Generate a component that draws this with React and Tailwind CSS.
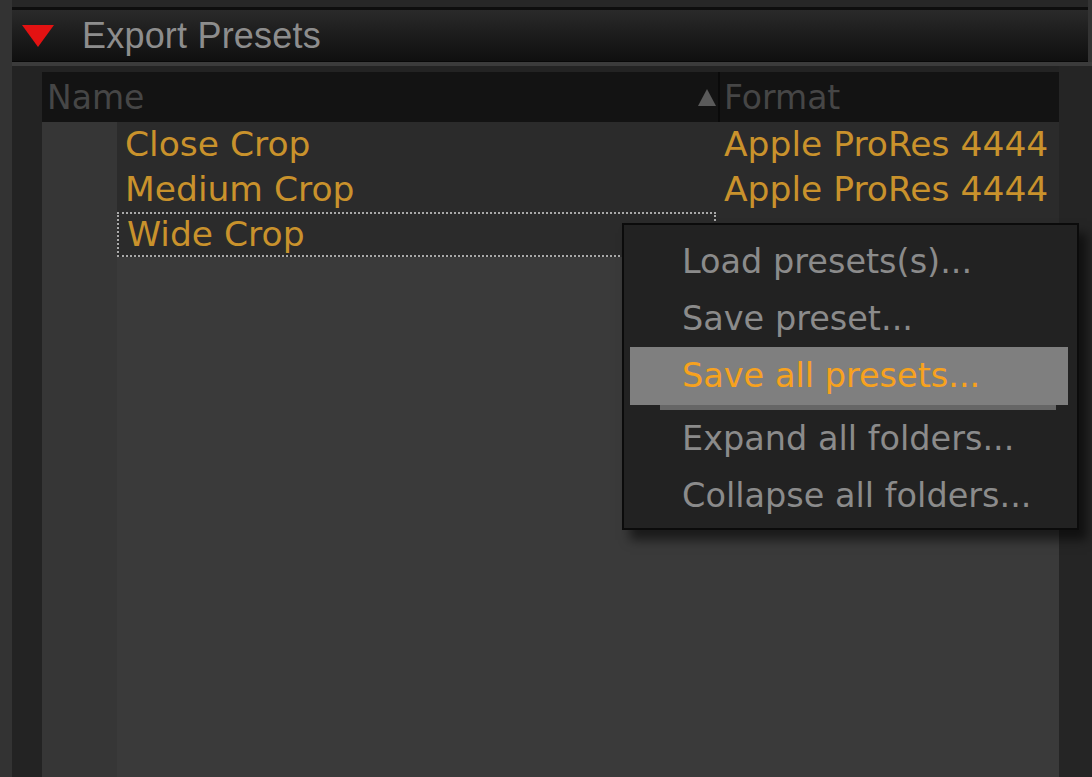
// Export Presets panel with an open context menu

const presets = [
  { name: 'Close Crop', format: 'Apple ProRes 4444 XQ' },
  { name: 'Medium Crop', format: 'Apple ProRes 4444 XQ' },
  { name: 'Wide Crop', format: '', focused: true },
];

const menuItems = [
  { label: 'Load presets(s)...' },
  { label: 'Save preset...' },
  { label: 'Save all presets...', active: true },
  { label: 'Expand all folders...' },
  { label: 'Collapse all folders...' },
];

const disclosure = (
  <svg width="32" height="22" viewBox="0 0 32 22"><polygon points="0,0 32,0 16,22" fill="#e31212" /></svg>
);

const sortUp = (
  <svg width="18" height="17" viewBox="0 0 18 17"><polygon points="9,0 18,17 0,17" fill="#5a5a5a" /></svg>
);

function ContextMenu() {
  return (
    <div className="absolute left-[622px] top-[223px] w-[457px] h-[307px] bg-[#222222] border-2 border-[#0b0b0b] shadow-[8px_10px_10px_rgba(0,0,0,0.55)] pt-[8px] text-[33.5px]">
      {menuItems.map(item => (
        item.active ? (
          <div key={item.label}>
            <div className="ml-[6px] mr-[9px] h-[58px] bg-[#7f7f7f] flex items-center pl-[52px] text-[#f7a21e]">
              {item.label}
            </div>
            <div className="ml-[36px] mr-[21px] h-[5px] bg-[#666666]" />
          </div>
        ) : (
          <div key={item.label} className="h-[57px] flex items-center pl-[58px] text-[#8b8b8b]">
            {item.label}
          </div>
        )
      ))}
    </div>
  );
}

export default function App() {
  return (
    <div className="relative w-[1092px] h-[777px] overflow-hidden bg-[#333333] flex text-[33px] leading-none" style={{ fontFamily: '"DejaVu Sans", sans-serif' }}>
      <div className="w-[12px] shrink-0 bg-[#333333]" />

      <div className="flex-1 flex flex-col min-w-0">
        <div className="h-[7px] bg-[#272727] mr-[4px]" />
        <div className="h-[3px] bg-[#0e0e0e] mr-[4px]" />

        {/* Panel header */}
        <div className="h-[52px] mr-[4px] bg-gradient-to-b from-[#2a2a2a] to-[#0f0f0f] border-b border-[#080808] flex items-center gap-[28px] pl-[10px]">
          {disclosure}
          <span className="text-[#8d8d8d] text-[36px] tracking-[0.2px]" style={{ fontFamily: '"Liberation Sans", sans-serif' }}>Export Presets</span>
        </div>
        <div className="h-[4px] bg-[#3b3b3b]" />

        <div className="flex-1 flex min-h-0">
          <div className="w-[30px] shrink-0 bg-[#232323]" />

          <div className="flex-1 flex flex-col min-w-0 bg-[#232323] pt-[6px]">
            {/* Column header */}
            <div className="h-[50px] shrink-0 bg-[#131313] flex">
              <div className="w-[676px] shrink-0 flex items-center justify-between pl-[5px] pr-[2px] text-[#464646]">
                <span>Name</span>
                {sortUp}
              </div>
              <div className="w-[2px] bg-[#0a0a0a]" />
              <div className="flex-1 flex items-center pl-[4px] text-[#464646]">Format</div>
            </div>

            <div className="flex-1 flex min-h-0">
              <div className="w-[75px] shrink-0 bg-[#363636]" />
              <div className="flex-1 flex flex-col min-w-0">
                {presets.map(p => (
                  <div key={p.name} className="h-[45px] shrink-0 flex bg-[#2b2b2b] text-[#c9922c] text-[34.5px]">
                    <div className={`w-[599px] shrink-0 flex items-center pl-[8px] ${p.focused ? 'border-2 border-dotted border-[#a9a9a9]' : ''}`}>
                      {p.name}
                    </div>
                    <div className="flex-1 flex items-center pl-[8px] whitespace-nowrap overflow-hidden">{p.format}</div>
                  </div>
                ))}
                <div className="flex-1 bg-[#3a3a3a]" />
              </div>
            </div>
          </div>

          <div className="w-[33px] shrink-0 bg-[#252525]" />
        </div>
      </div>

      <ContextMenu />
    </div>
  );
}
